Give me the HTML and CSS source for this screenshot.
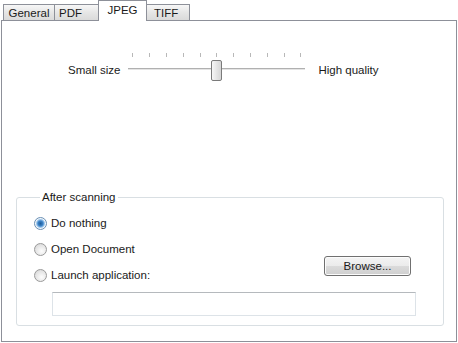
FILE: index.html
```html
<!DOCTYPE html>
<html>
<head>
<meta charset="utf-8">
<link rel="stylesheet" href="styles.css">
</head>
<body>
<div class="tabs">
  <div class="tab t-general">General</div>
  <div class="tab t-pdf">PDF</div>
  <div class="tab t-jpeg active">JPEG</div>
  <div class="tab t-tiff">TIFF</div>
</div>
<div class="panel">
  <div class="slider-row">
    <span class="lbl lbl-left">Small size</span>
    <div class="slider">
      <div class="ticks">
        <i></i><i></i><i></i><i></i><i></i><i></i><i></i><i></i><i></i><i></i><i></i>
      </div>
      <div class="track"></div>
      <div class="thumb"></div>
    </div>
    <span class="lbl lbl-right">High quality</span>
  </div>
  <fieldset class="group">
    <legend>After scanning</legend>
    <div class="row"><span class="radio checked"></span><span>Do nothing</span></div>
    <div class="row"><span class="radio"></span><span>Open Document</span></div>
    <div class="row row-launch">
      <div class="row-left"><span class="radio"></span><span>Launch application:</span></div>
      <div class="btn">Browse...</div>
    </div>
    <div class="input"></div>
  </fieldset>
</div>
</body>
</html>
```
FILE: styles.css
```css
html, body {
  margin: 0;
  padding: 0;
  background: #fff;
}
body {
  font-family: "Liberation Sans", Arial, sans-serif;
  font-size: 11.5px;
  color: #1a1a1a;
  width: 458px;
  height: 343px;
  overflow: hidden;
}
.tabs {
  display: flex;
  align-items: flex-end;
  height: 20px;
  padding-left: 3px;
  position: relative;
  z-index: 2;
}
.tab {
  box-sizing: border-box;
  height: 16px;
  border: 1px solid #8d9099;
  border-bottom: none;
  background: linear-gradient(#f7f7f7, #e6e6e6 50%, #dadada);
  margin-right: -1px;
  display: flex;
  align-items: center;
  justify-content: center;
  line-height: 14px;
  padding-top: 1px;
}
.t-general { width: 52px; }
.t-pdf { width: 45px; justify-content: flex-start; padding-left: 4px; }
.t-jpeg { width: 49px; }
.t-tiff { width: 44px; justify-content: flex-start; padding-left: 7px; }
.tab.active {
  height: 21px;
  margin-bottom: -1px;
  background: #fff;
  align-items: flex-start;
  padding-top: 2px;
  position: relative;
  z-index: 3;
}
.panel {
  box-sizing: border-box;
  margin-left: 1px;
  width: 456px;
  height: 322px;
  border: 1px solid #8d9099;
  background: #fff;
  padding-top: 30px;
}
.slider-row {
  display: flex;
  align-items: flex-start;
  padding-left: 66px;
  height: 30px;
}
.lbl {
  margin-top: 12px;
  line-height: 14px;
  white-space: nowrap;
}
.lbl-left { margin-right: 8px; }
.lbl-right { margin-left: 13px; }
.slider {
  position: relative;
  width: 177px;
  height: 30px;
  flex: none;
}
.ticks {
  display: flex;
  justify-content: space-between;
  padding: 0 4px;
  margin-top: 2px;
  height: 4px;
}
.ticks i {
  display: block;
  width: 1px;
  height: 4px;
  background: #b8b8b8;
}
.track {
  margin-top: 11px;
  height: 1px;
  border-top: 1px solid #b0b0b0;
  background: #e4e4e4;
}
.thumb {
  position: absolute;
  left: 83px;
  top: 9px;
  width: 9px;
  height: 19px;
  border: 1px solid #7a7a7a;
  border-radius: 2px;
  background: linear-gradient(90deg, #f6f6f6, #e2e2e2 60%, #d6d6d6);
}
.group {
  box-sizing: border-box;
  margin: 109px 12px 0 14px;
  border: 1px solid #d9dfe3;
  border-radius: 3px;
  padding: 10px 27px 9px 17px;
  min-width: 0;
}
.group legend {
  margin-left: 6px;
  padding: 0 2px;
  line-height: 14px;
}
.row {
  display: flex;
  align-items: center;
  height: 18px;
  margin-bottom: 8px;
}
.row-left {
  display: flex;
  align-items: center;
}
.row-launch {
  justify-content: space-between;
}
.radio {
  box-sizing: border-box;
  width: 13px;
  height: 13px;
  border-radius: 50%;
  border: 1px solid #9a9a9a;
  background: radial-gradient(circle at 60% 65%, #fdfdfd, #e4e4e4 60%, #cfcfcf);
  margin-right: 4px;
  flex: none;
}
.radio.checked {
  border-color: #6a8fb4;
  background: radial-gradient(circle, #1f5c99 0, #3a83c8 2.5px, #9fc7ec 4px, #f4f8fb 5px, #e0e6ec 100%);
}
.btn {
  box-sizing: border-box;
  width: 87px;
  height: 20px;
  margin-top: -19px;
  margin-right: 5px;
  border: 1px solid #707070;
  border-radius: 3px;
  background: linear-gradient(#f4f4f4, #ebebeb 50%, #dbdbdb 51%, #cfcfcf);
  display: flex;
  align-items: center;
  justify-content: center;
  line-height: 14px;
  box-shadow: inset 0 0 0 1px #fcfcfc;
}
.input {
  box-sizing: border-box;
  margin-left: 18px;
  height: 24px;
  border: 1px solid #dde3e8;
  border-top-color: #b5b9bd;
  background: #fff;
}
```
